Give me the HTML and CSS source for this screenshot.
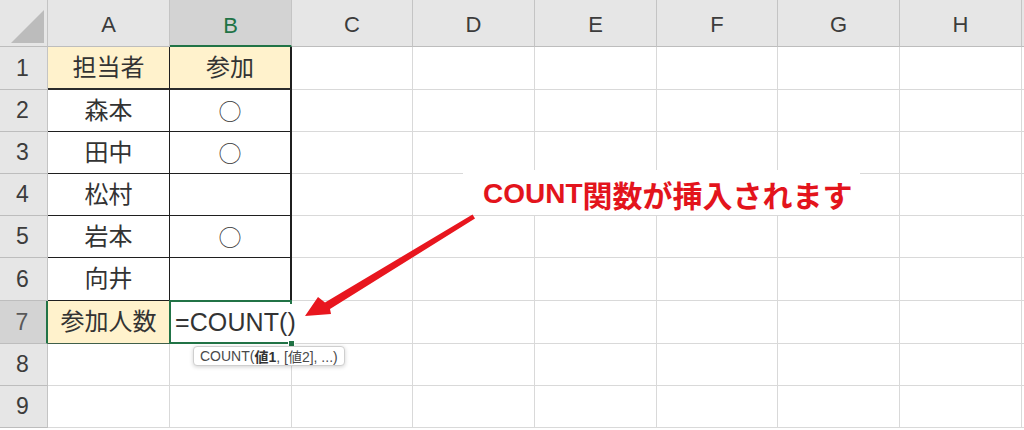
FILE: index.html
```html
<!DOCTYPE html>
<html lang="ja">
<head>
<meta charset="utf-8">
<title>COUNT</title>
<link rel="stylesheet" href="styles.css">
</head>
<body>
<div class="sheet">
  <div class="cell corner"><span class="tri"></span></div>
  <div class="cell hd">A</div>
  <div class="cell hd sel">B</div>
  <div class="cell hd">C</div>
  <div class="cell hd">D</div>
  <div class="cell hd">E</div>
  <div class="cell hd">F</div>
  <div class="cell hd">G</div>
  <div class="cell hd">H</div>
  <div class="cell hd edge"></div>

  <div class="cell rh">1</div>
  <div class="cell tbl top yel">担当者</div>
  <div class="cell tbl top colb yel">参加</div>
  <div class="cell"></div><div class="cell"></div><div class="cell"></div><div class="cell"></div><div class="cell"></div><div class="cell"></div><div class="cell edge"></div>

  <div class="cell rh">2</div>
  <div class="cell tbl">森本</div>
  <div class="cell tbl colb"><span class="mark">○</span></div>
  <div class="cell"></div><div class="cell"></div><div class="cell"></div><div class="cell"></div><div class="cell"></div><div class="cell"></div><div class="cell edge"></div>

  <div class="cell rh">3</div>
  <div class="cell tbl">田中</div>
  <div class="cell tbl colb"><span class="mark">○</span></div>
  <div class="cell"></div><div class="cell"></div><div class="cell"></div><div class="cell"></div><div class="cell"></div><div class="cell"></div><div class="cell edge"></div>

  <div class="cell rh">4</div>
  <div class="cell tbl">松村</div>
  <div class="cell tbl colb"></div>
  <div class="cell"></div><div class="cell"></div><div class="cell"></div><div class="cell"></div><div class="cell"></div><div class="cell"></div><div class="cell edge"></div>

  <div class="cell rh">5</div>
  <div class="cell tbl">岩本</div>
  <div class="cell tbl colb"><span class="mark">○</span></div>
  <div class="cell"></div><div class="cell"></div><div class="cell"></div><div class="cell"></div><div class="cell"></div><div class="cell"></div><div class="cell edge"></div>

  <div class="cell rh">6</div>
  <div class="cell tbl">向井</div>
  <div class="cell tbl colb"></div>
  <div class="cell"></div><div class="cell"></div><div class="cell"></div><div class="cell"></div><div class="cell"></div><div class="cell"></div><div class="cell edge"></div>

  <div class="cell rh rsel">7</div>
  <div class="cell yel a7">参加人数</div>
  <div class="cell active"><span class="edit">=COUNT()</span><span class="handle"></span></div>
  <div class="cell"></div><div class="cell"></div><div class="cell"></div><div class="cell"></div><div class="cell"></div><div class="cell"></div><div class="cell edge"></div>

  <div class="cell rh">8</div>
  <div class="cell"></div><div class="cell"></div><div class="cell"></div><div class="cell"></div><div class="cell"></div><div class="cell"></div><div class="cell"></div><div class="cell"></div><div class="cell edge"></div>

  <div class="cell rh">9</div>
  <div class="cell"></div><div class="cell"></div><div class="cell"></div><div class="cell"></div><div class="cell"></div><div class="cell"></div><div class="cell"></div><div class="cell"></div><div class="cell edge"></div>

  <div class="tip">COUNT(<b>値1</b>, [値2], ...)</div>

  <div class="note"><span class="note-en">COUNT</span>関数が挿入されます</div>

  <svg class="arrow" width="1024" height="430" viewBox="0 0 1024 430">
    <polygon points="305,316 318,297 325,302.5 472.5,214.5 475,218.5 330,309 331,314" fill="#e8161e"/>
  </svg>
</div>
</body>
</html>
```

FILE: styles.css
```css
* {
  box-sizing: border-box;
}

html, body {
  margin: 0;
  padding: 0;
}

body {
  width: 1024px;
  height: 430px;
  overflow: hidden;
  background: #ffffff;
  font-family: "Liberation Sans", "Noto Sans CJK JP", sans-serif;
  color: #333333;
}

.sheet {
  position: relative;
  display: grid;
  grid-template-columns: 48px 122px 122px 121px 122px 122px 121px 122px 122px 2px;
  grid-template-rows: 47px 43px 42px 42px 42px 42px 43px 43px 42px 42px;
}

.cell {
  display: flex;
  align-items: center;
  justify-content: center;
  border-right: 1px solid #d9d9d9;
  border-bottom: 1px solid #d9d9d9;
  font-size: 24px;
  line-height: 1;
  color: #333333;
  white-space: nowrap;
}

.cell.edge {
  border-right: none;
}

/* headers */
.cell.corner,
.cell.hd,
.cell.rh {
  background: #e6e6e6;
  border-right-color: #c4c4c4;
  border-bottom-color: #bdbdbd;
  color: #3c3c3c;
  font-size: 22px;
}

.cell.rh {
  font-size: 23px;
  padding-right: 2px;
}

.cell.corner {
  position: relative;
}

.tri {
  position: absolute;
  right: 3px;
  bottom: 3px;
  width: 0;
  height: 0;
  border-left: 33px solid transparent;
  border-bottom: 33px solid #bcbcbc;
}

.cell.hd {
  padding-top: 4px;
}

.cell.hd.sel {
  background: #d3d3d3;
  color: #217346;
  border-bottom: 2px solid #217346;
  padding-top: 6px;
}

.cell.rh.rsel {
  background: #d3d3d3;
  color: #595959;
  border-right: 2px solid #217346;
}

/* table */
.cell.yel {
  background: #fff2cc;
}

.cell.tbl {
  border-right-color: #1f1f1f;
  border-bottom-color: #1f1f1f;
}

.cell.tbl.top {
  border-bottom: 2px solid #2b2b2b;
}

.cell.tbl.colb {
  border-right: 2px solid #1f1f1f;
}

.mark {
  font-family: "Noto Sans CJK JP", sans-serif;
  font-size: 23px;
  font-weight: 300;
  color: #333333;
}

.cell.a7 {
  border-bottom-color: #3f5f4a;
  border-right-color: #217346;
}

.cell.active {
  position: relative;
  justify-content: flex-start;
  overflow: visible;
  z-index: 2;
}

.cell.active::after {
  content: "";
  position: absolute;
  left: -1px;
  top: -1px;
  right: -1px;
  bottom: -1px;
  border: 2px solid #217346;
  pointer-events: none;
  z-index: 1;
}

.edit {
  position: relative;
  z-index: 2;
  display: flex;
  align-items: center;
  height: 36px;
  margin-left: 1px;
  padding: 0 2px 0 4px;
  background: #ffffff;
  font-size: 25px;
  letter-spacing: 0.1px;
  color: #333333;
}

.handle {
  position: absolute;
  right: -4px;
  bottom: -4px;
  width: 7px;
  height: 7px;
  background: #217346;
  border: 1px solid #ffffff;
  z-index: 3;
}

/* tooltip */
.tip {
  position: absolute;
  left: 193px;
  top: 346px;
  height: 20px;
  padding: 0 6px;
  display: flex;
  align-items: center;
  background: #ffffff;
  border: 1px solid #cfcfcf;
  border-radius: 4px;
  box-shadow: 0 1px 4px rgba(0, 0, 0, 0.18);
  font-size: 14px;
  color: #4a4a4a;
  white-space: nowrap;
  z-index: 4;
}

.tip b {
  font-weight: bold;
  color: #333333;
}

/* annotation */
.note {
  position: absolute;
  left: 463px;
  top: 170px;
  width: 397px;
  height: 45px;
  padding-left: 20px;
  padding-top: 2px;
  display: flex;
  align-items: center;
  background: #ffffff;
  color: #e3141c;
  font-weight: bold;
  font-size: 30px;
  white-space: nowrap;
  z-index: 5;
}

.note-en {
  font-size: 28px;
}

.arrow {
  position: absolute;
  left: 0;
  top: 0;
  pointer-events: none;
  z-index: 6;
}
```
